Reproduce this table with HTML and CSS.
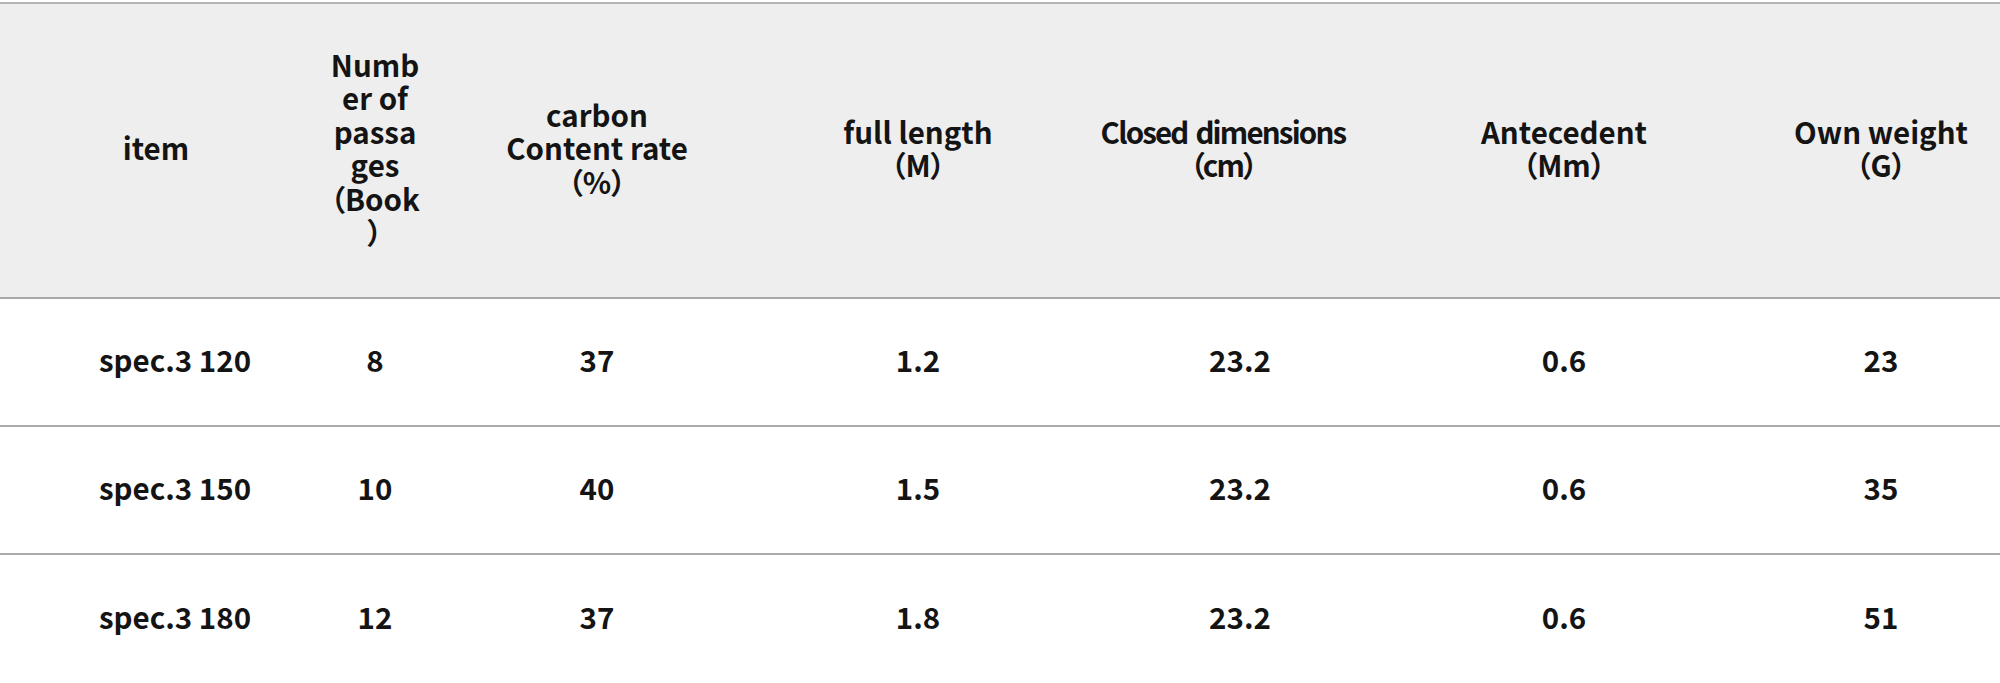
FILE: index.html
```html
<!DOCTYPE html>
<html lang="en">
<head>
<meta charset="utf-8">
<title>spec.3 specifications</title>
<link rel="stylesheet" href="styles.css">
</head>
<body>
<div class="wrap">
  <table class="spec">
    <colgroup>
      <col class="c1"><col class="c2"><col class="c3"><col class="c4"><col class="c5"><col class="c6"><col class="c7">
    </colgroup>
    <thead>
      <tr>
        <th>item</th>
        <th class="narrow">Number of passages（Book）</th>
        <th>carbon<br>Content rate<br>（%）</th>
        <th>full length<br>（M）</th>
        <th class="tight">Closed dimensions<br>（cm）</th>
        <th>Antecedent<br>（Mm）</th>
        <th>Own weight<br>（G）</th>
      </tr>
    </thead>
    <tbody>
      <tr>
        <td class="name">spec.3 120</td><td class="narrow">8</td><td>37</td><td>1.2</td><td class="shift">23.2</td><td>0.6</td><td>23</td>
      </tr>
      <tr>
        <td class="name">spec.3 150</td><td class="narrow">10</td><td>40</td><td>1.5</td><td class="shift">23.2</td><td>0.6</td><td>35</td>
      </tr>
      <tr class="last">
        <td class="name">spec.3 180</td><td class="narrow">12</td><td>37</td><td>1.8</td><td class="shift">23.2</td><td>0.6</td><td>51</td>
      </tr>
    </tbody>
  </table>
</div>
</body>
</html>
```

FILE: styles.css
```css
html, body {
  margin: 0;
  padding: 0;
  background: #ffffff;
  overflow: hidden;
}

.wrap {
  padding-top: 2px;
}

.spec {
  width: 2000px;
  table-layout: fixed;
  border-collapse: separate;
  border-spacing: 0;
  font-family: "Noto Sans CJK JP", "Noto Sans", sans-serif;
  font-weight: 700;
  font-size: 29.5px;
  line-height: 33.5px;
  color: #141414;
  font-feature-settings: "palt";
}

.c1 { width: 312px; }
.c2 { width: 126px; }
.c3 { width: 318px; }
.c4 { width: 324px; }
.c5 { width: 286px; }
.c6 { width: 396px; }
.c7 { width: 238px; }

.spec th,
.spec td {
  box-sizing: border-box;
  padding: 0 6px 5px;
  text-align: center;
  vertical-align: middle;
  overflow-wrap: anywhere;
}

.spec .narrow {
  padding-left: 17px;
  padding-right: 17px;
}

.spec th {
  height: 297px;
  background: #eeeeee;
  border-top: 2px solid #b4b4b4;
  border-bottom: 2px solid #a8a8a8;
  font-weight: 700;
}

.spec th.tight {
  letter-spacing: -1.8px;
  word-spacing: 3px;
}

.spec td {
  height: 128px;
  border-bottom: 2px solid #ababab;
}

.spec .last td {
  border-bottom: 0;
}

.spec td.name {
  padding-left: 44px;
}

.spec td.shift {
  padding-left: 40px;
}
```
